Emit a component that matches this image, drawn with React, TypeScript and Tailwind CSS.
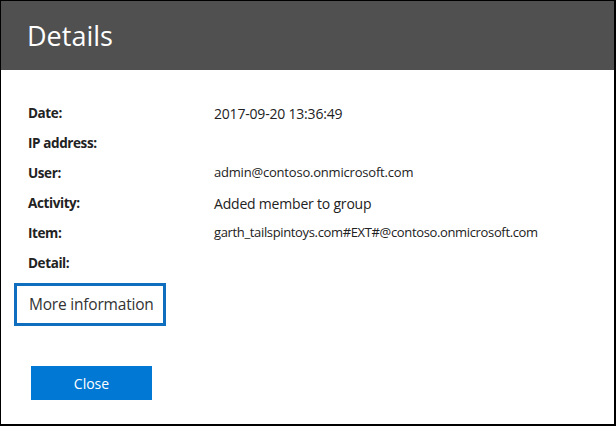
const rows: { label: string; value: string; size: string }[] = [
  { label: 'Date:', value: '2017-09-20 13:36:49', size: 'text-[14px]' },
  { label: 'IP address:', value: '', size: 'text-[14px]' },
  { label: 'User:', value: 'admin@contoso.onmicrosoft.com', size: 'text-[13px]' },
  { label: 'Activity:', value: 'Added member to group', size: 'text-[14px]' },
  { label: 'Item:', value: 'garth_tailspintoys.com#EXT#@contoso.onmicrosoft.com', size: 'text-[13px] tracking-[-0.35px]' },
  { label: 'Detail:', value: '', size: 'text-[14px]' },
];

export default function App() {
  return (
    <div className="w-[616px] h-[426px] bg-white border-l border-t border-r-2 border-b-2 border-black font-['Open_Sans',sans-serif] text-[#222]">
      {/* Header */}
      <div className="h-[69px] bg-[#505050] pl-[26px] pt-[17px]">
        <h1 className="text-[27px] leading-[36px] text-white">Details</h1>
      </div>

      {/* Rows */}
      <div className="pl-[27px] pt-[28px]">
        {rows.map((row) => (
          <div key={row.label} className="flex items-center h-[30px]">
            <div className="w-[186px] text-[13.5px] font-bold tracking-[-0.4px]">{row.label}</div>
            <div className={`${row.size} tracking-[-0.2px]`}>{row.value}</div>
          </div>
        ))}
      </div>

      <div className="pl-[13px] pt-[5px]">
        <button className="h-[43px] w-[152px] border-[3px] border-[#106ebe] text-left pl-[12px] text-[15.5px] text-[#333] tracking-[-0.2px]">
          More information
        </button>
      </div>

      <div className="pl-[30px] pt-[40px]">
        <button className="h-[34px] w-[121px] bg-[#0078d4] text-white text-[14px]">Close</button>
      </div>
    </div>
  );
}
